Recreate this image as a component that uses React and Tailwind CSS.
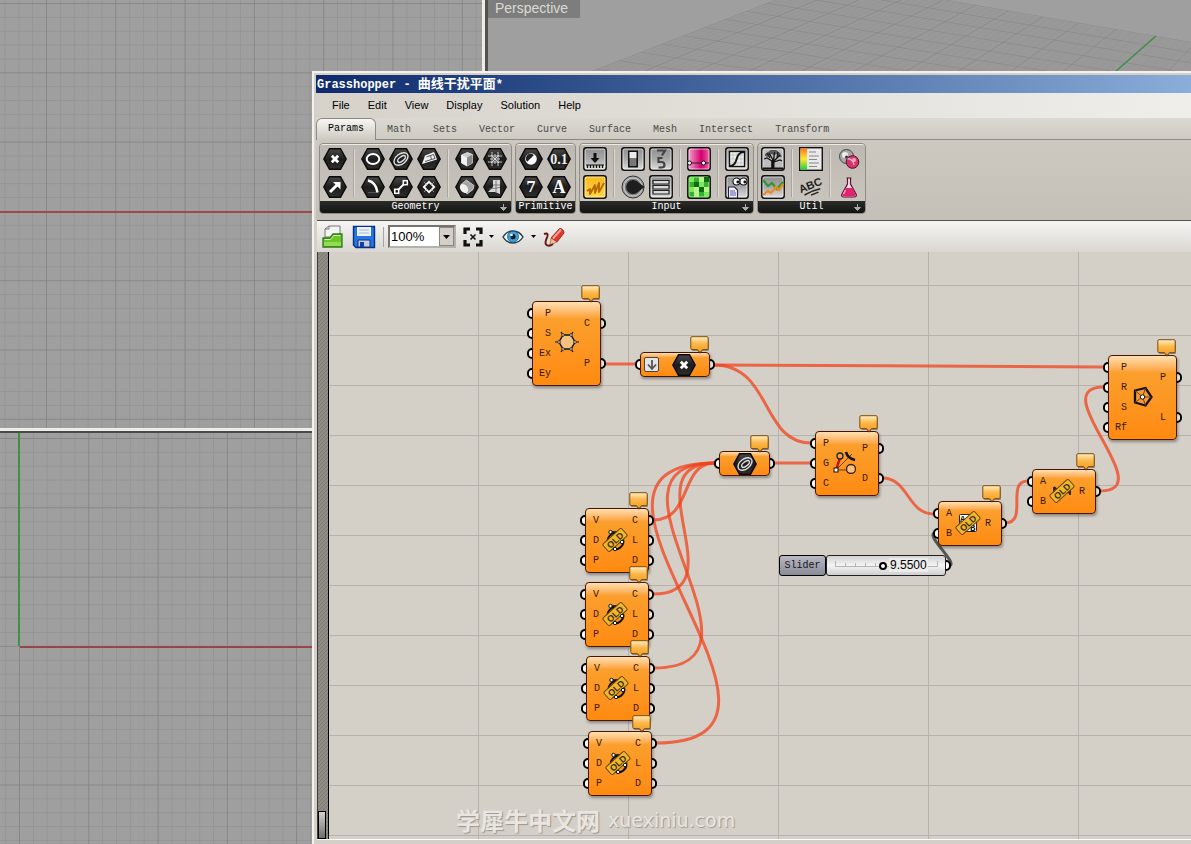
import React from 'react';

/* ---------- Ribbon icons ---------- */

const Hex = ({ children }) => (
  <svg className="h-6 w-6" viewBox="0 0 24 24">
    <defs>
      <linearGradient id="hexFill" x1="0" y1="0" x2="0" y2="1">
        <stop offset="0" stopColor="#4a4a4a" />
        <stop offset="0.5" stopColor="#1c1c1c" />
        <stop offset="1" stopColor="#2e2e2e" />
      </linearGradient>
    </defs>
    <polygon points="0.8,12 6.5,1.8 17.5,1.8 23.2,12 17.5,22.2 6.5,22.2" fill="url(#hexFill)" stroke="#0a0a0a" strokeWidth="1.4" />
    {children}
  </svg>
);

const Tile = ({ fill = 'url(#tileGray)', children }) => (
  <svg className="h-6 w-6" viewBox="0 0 24 24">
    <defs>
      <linearGradient id="tileGray" x1="0" y1="0" x2="0" y2="1">
        <stop offset="0" stopColor="#8e8e8e" />
        <stop offset="0.5" stopColor="#a9a9a9" />
        <stop offset="1" stopColor="#dedede" />
      </linearGradient>
      <linearGradient id="tilePink" x1="0" y1="0" x2="1" y2="0">
        <stop offset="0" stopColor="#f7a8d4" />
        <stop offset="0.6" stopColor="#d3006c" />
        <stop offset="1" stopColor="#e86aa8" />
      </linearGradient>
      <linearGradient id="tileYellow" x1="0" y1="0" x2="0" y2="1">
        <stop offset="0" stopColor="#f7b71c" />
        <stop offset="1" stopColor="#ffd84a" />
      </linearGradient>
    </defs>
    <rect x="0.8" y="0.8" width="22.4" height="22.4" rx="2.5" fill={fill} stroke="#111" strokeWidth="1.5" />
    <rect x="2.1" y="2.1" width="19.8" height="19.8" rx="1.5" fill="none" stroke="#fff" strokeOpacity="0.55" strokeWidth="1" />
    {children}
  </svg>
);

const icons = {
  point: (
    <Hex>
      <path d="M8.8 8.8l6.4 6.4M15.2 8.8l-6.4 6.4" stroke="#fff" strokeWidth="2.8" />
    </Hex>
  ),
  vector: (
    <Hex>
      <path d="M7 17l7-7" stroke="#fff" strokeWidth="3" />
      <path d="M10 7h7.5v7.5z" fill="#fff" />
    </Hex>
  ),
  circle: (
    <Hex>
      <ellipse cx="12" cy="12" rx="6.3" ry="5" fill="none" stroke="#fff" strokeWidth="2" />
    </Hex>
  ),
  curve: (
    <Hex>
      <g fill="none" stroke="#ddd" strokeWidth="1.4" transform="rotate(-38 12 12)">
        <ellipse cx="12" cy="12" rx="8" ry="5" />
        <ellipse cx="12.5" cy="12.3" rx="4.6" ry="2.2" />
      </g>
    </Hex>
  ),
  surface: (
    <Hex>
      <path d="M8 8.500l9-3.500 3 7.500-15 4.500z" fill="#f2f2f2" />
      <path d="M9.500 10l4-1.500 1 4-6.500 2M13.500 8.500l3-1 1.500 4-3.500 1" stroke="#444" strokeWidth="0.900" fill="none" />
    </Hex>
  ),
  arc: (
    <Hex>
      <path d="M7 5.500c5 1 8.500 5 9.500 12" fill="none" stroke="#fff" strokeWidth="2.400" />
      <path d="M7.500 17.500h9" fill="none" stroke="#999" strokeWidth="0.800" strokeDasharray="1 1" />
    </Hex>
  ),
  line: (
    <Hex>
      <path d="M8 16l8-8" stroke="#fff" strokeWidth="1.800" />
      <rect x="14.300" y="5.700" width="4" height="4" fill="#222" stroke="#fff" strokeWidth="1.500" />
      <rect x="5.700" y="14.300" width="4" height="4" fill="#222" stroke="#fff" strokeWidth="1.500" />
    </Hex>
  ),
  plane: (
    <Hex>
      <path d="M12 6.800l5.200 5.200-5.200 5.200-5.200-5.200z" fill="#222" stroke="#fff" strokeWidth="1.800" />
      <path d="M7 7l3 3M17 7l-3 3M7 17l3-3M17 17l-3-3" stroke="#aaa" strokeWidth="0.800" />
    </Hex>
  ),
  brep: (
    <Hex>
      <path d="M6.500 8l6-2.500 5 2v8.500l-5.500 3-5.500-3z" fill="#ccc" stroke="#eee" strokeWidth="0.800" />
      <path d="M6.500 8l5.500 2.500v8.500l-5.500-3z" fill="#f2f2f2" />
      <path d="M12 10.500l5.500-3v8.500l-5.500 3z" fill="#8a8a8a" />
    </Hex>
  ),
  mesh: (
    <Hex>
      <path d="M5 9h14M5 15h14M9 5v14M15 5v14M12 7v10M7 12h10M8 8l8 8M16 8l-8 8" stroke="#ddd" strokeWidth="0.900" fill="none" />
    </Hex>
  ),
  box: (
    <Hex>
      <path d="M6 9.500l5.500-4.500 7.500 5.500-1 4-6 4.500z" fill="#a5a5a5" stroke="#ddd" strokeWidth="0.800" />
      <ellipse cx="9" cy="13.500" rx="3.600" ry="5" fill="#f0f0f0" transform="rotate(-38 9 13.500)" />
    </Hex>
  ),
  solid: (
    <Hex>
      <path d="M10 5l7 0v14l-5-2-7 0 5-5z" fill="#d8d8d8" />
      <path d="M13 5.500v12M6 14l11-1.500M10 10h7" stroke="#666" strokeWidth="0.800" fill="none" />
    </Hex>
  ),
  bool: (
    <Hex>
      <circle cx="12" cy="12" r="5.800" fill="#fff" />
      <path d="M8.200 14.800a4.600 4.600 0 0 1 6.600-6.600z" fill="#222" />
    </Hex>
  ),
  number: (
    <Hex>
      <text x="12" y="17" textAnchor="middle" className="font-['Liberation_Serif',serif] text-[14px] font-bold" fill="#eee">0.1</text>
    </Hex>
  ),
  integer: (
    <Hex>
      <text x="12" y="17" textAnchor="middle" className="font-['DejaVu_Serif',serif] text-[14px] font-bold" fill="#fff">7</text>
    </Hex>
  ),
  text: (
    <Hex>
      <text x="12" y="18" textAnchor="middle" className="font-['Liberation_Serif',serif] text-[18px] font-bold" fill="#fff">A</text>
    </Hex>
  ),
  download: (
    <Tile>
      <path d="M10.500 6h3v5h3l-4.500 5-4.500-5h3z" fill="#111" />
      <path d="M3 18h18M4.500 18v3M7.500 18v3M10.500 18v3M13.500 18v3M16.500 18v3M19.500 18v3" stroke="#111" strokeWidth="1.200" />
    </Tile>
  ),
  scribble: (
    <Tile fill="url(#tileYellow)">
      <path d="M4 16l3-2 0 5 5-9 0 8 4-10 0 9 5-9" fill="none" stroke="#b86a00" strokeWidth="1.900" strokeLinejoin="round" />
    </Tile>
  ),
  toggle: (
    <Tile>
      <rect x="7" y="3.500" width="10" height="17" fill="#111" />
      <rect x="8.500" y="12" width="7" height="7" fill="#777" />
      <rect x="8.500" y="5" width="7" height="6.500" fill="#ececec" />
    </Tile>
  ),
  knob: (
    <svg className="h-6 w-6" viewBox="0 0 24 24">
      <circle cx="12" cy="12" r="11" fill="#a8a8a8" stroke="#333" strokeWidth="1" />
      <circle cx="12" cy="12" r="8.800" fill="#777" stroke="#ddd" strokeWidth="0.700" />
      <path d="M23.500 12l-6-4.500a7 7 0 1 0 0 9z" fill="#1e1e1e" />
    </svg>
  ),
  digits: (
    <Tile>
      <path d="M8 3.500l8 0-3 5M13.500 11h-4v4h3c4 0 4 5.500 0 5.500h-3" fill="none" stroke="#444" strokeWidth="2.200" />
    </Tile>
  ),
  list: (
    <Tile>
      <path d="M4 5.500h16v3.500H4zM4 10.500h16v3.500H4zM4 15.500h16v3.500H4z" fill="#d8d8d8" stroke="#222" strokeWidth="1.200" />
    </Tile>
  ),
  gradient: (
    <Tile fill="url(#tilePink)">
      <path d="M2 16h20" stroke="#222" strokeWidth="1.200" />
      <circle cx="2.500" cy="16" r="2" fill="#fff" stroke="#111" strokeWidth="1" />
      <circle cx="16.500" cy="16" r="2" fill="#fff" stroke="#111" strokeWidth="1" />
    </Tile>
  ),
  image: (
    <Tile fill="#37b02c">
      <path d="M2 2h5v5h-5zM12 7h5v5h-5zM2 12h5v5h-5zM17 17h5v5h-5z" fill="#7bea5c" />
      <path d="M7 7h5v5h-5zM17 2h5v5h-5zM12 12h5v5h-5z" fill="#0d6b14" />
      <path d="M12 2h5v5h-5zM7 12h5v10h-5zM17 12h5v5h-5z" fill="#b8f58e" />
    </Tile>
  ),
  graph: (
    <Tile>
      <rect x="4.500" y="4.500" width="15" height="15" fill="#eee" stroke="#111" strokeWidth="1.300" />
      <path d="M8 5v14M12 5v14M16 5v14M5 8h14M5 12h14M5 16h14" stroke="#bbb" strokeWidth="0.700" />
      <path d="M5 19c9 0 4-14 14-14" fill="none" stroke="#111" strokeWidth="1.900" />
    </Tile>
  ),
  reader: (
    <Tile>
      <circle cx="11.500" cy="6.500" r="3.500" fill="#fff" stroke="#111" strokeWidth="1.100" />
      <circle cx="18.500" cy="6.500" r="3.500" fill="#fff" stroke="#111" strokeWidth="1.100" />
      <circle cx="12.800" cy="7" r="1.400" fill="#111" />
      <circle cx="19.800" cy="7" r="1.400" fill="#111" />
      <path d="M3.500 12h6l3 3v8h-9z" fill="#f1f1ff" stroke="#223" strokeWidth="1.100" />
      <path d="M5 16h5M5 18h6M5 20h6" stroke="#55a" strokeWidth="1" />
    </Tile>
  ),
  tree: (
    <Tile fill="#bdbdbd">
      <path d="M11 21l0-7-5-3-3 1M12 13l-4-7M12.500 14l1-9M13 14l6-6M13 15l6-2 2 1M9 11l-3-5M16 11l1-6" fill="none" stroke="#111" strokeWidth="1.300" />
      <path d="M4 7l3-2 3-2 5 0 4 3 2 4-3 0-2-3-3 1-3-1-3 3-3-1z" fill="#222" fillOpacity="0.650" />
      <path d="M10.500 13h3v8h-3zM2 20.500h20v2H2z" fill="#111" />
    </Tile>
  ),
  quickgraph: (
    <Tile>
      <path d="M2 5l5 6 4-3 5 6 6-7" fill="none" stroke="#2c9a33" strokeWidth="2.200" />
      <path d="M2 20l5-4 3 2 5-6 3 3 4-6" fill="none" stroke="#f08a1c" strokeWidth="2.200" />
    </Tile>
  ),
  legend: (
    <svg className="h-6 w-6" viewBox="0 0 24 24">
      <defs>
        <linearGradient id="legendBar" x1="0" y1="0" x2="0" y2="1">
          <stop offset="0" stopColor="#ff7a1a" />
          <stop offset="0.500" stopColor="#ffe833" />
          <stop offset="1" stopColor="#1fd13a" />
        </linearGradient>
      </defs>
      <rect x="0.700" y="0.700" width="22.600" height="22.600" fill="#e9e9e9" stroke="#111" strokeWidth="1.400" />
      <rect x="1.400" y="1.400" width="6.600" height="21.200" fill="url(#legendBar)" />
      <path d="M10 5h7M10 9h10M10 12.500h8M10 16h10M10 19.500h8" stroke="#888" strokeWidth="1" />
    </svg>
  ),
  abc: (
    <svg className="h-6 w-6 overflow-visible" viewBox="0 0 24 24">
      <g transform="rotate(-22 12 12)">
        <text x="12" y="14" textAnchor="middle" className="font-['Liberation_Sans',sans-serif] text-[11px] font-bold" fill="#222">ABC</text>
        <path d="M3 17c6-1 12-1 17 0M9 19.500h8" stroke="#222" strokeWidth="1.500" fill="none" />
      </g>
    </svg>
  ),
  cherry: (
    <svg className="h-6 w-6" viewBox="0 0 24 24">
      <circle cx="9.500" cy="9.500" r="7" fill="#a8a8a8" stroke="#444" strokeWidth="1" />
      <circle cx="8" cy="8" r="3" fill="#eee" />
      <circle cx="9.500" cy="10" r="1.500" fill="#333" />
      <circle cx="15.500" cy="15" r="6.300" fill="#d4366b" stroke="#551028" strokeWidth="1" />
      <path d="M10.500 11.500a7 7 0 0 1 6.500 6.500" stroke="#f7b7cb" strokeWidth="1.300" fill="none" />
      <circle cx="17" cy="13" r="2" fill="#f8a8c0" />
    </svg>
  ),
  flask: (
    <svg className="h-6 w-6" viewBox="0 0 24 24">
      <path d="M9.500 3h5M10.500 3v6l-5.500 10c-1 2 0 3 2 3h10c2 0 3-1 2-3l-5.500-10v-6" fill="#fbdde8" stroke="#5a1030" strokeWidth="1.200" />
      <path d="M8.500 13h7l3 6.500c.5 1.500-.5 2-1.500 2H7c-1 0-2-.5-1.500-2z" fill="#e0246e" />
      <path d="M8.500 15l-2 4" stroke="#f9a3c4" strokeWidth="1.500" />
    </svg>
  ),
};

const menuItems = ['File', 'Edit', 'View', 'Display', 'Solution', 'Help'];
const tabs = ['Params', 'Math', 'Sets', 'Vector', 'Curve', 'Surface', 'Mesh', 'Intersect', 'Transform'];

const ribbonGroups = [
  {
    name: 'Geometry',
    expandable: true,
    sections: [
      ['point', 'vector'],
      ['circle', 'arc', 'curve', 'line', 'surface', 'plane'],
      ['brep', 'box', 'mesh', 'solid'],
    ],
  },
  { name: 'Primitive', expandable: false, sections: [['bool', 'integer', 'number', 'text']] },
  {
    name: 'Input',
    expandable: true,
    sections: [
      ['download', 'scribble'],
      ['toggle', 'knob', 'digits', 'list'],
      ['gradient', 'image'],
      ['graph', 'reader'],
    ],
  },
  {
    name: 'Util',
    expandable: true,
    sections: [['tree', 'quickgraph'], ['legend', 'abc'], ['cherry', 'flask']],
  },
];

const RibbonGroup = ({ group }) => (
  <section className="flex flex-col overflow-hidden rounded-[4px] border border-[#8f8b85] bg-linear-to-b from-[#bdb8b1] to-[#cbc7bf]">
    <div className="flex flex-1 rounded-t-[3px] border-t border-[#efece6] pl-px pr-0.5">
      {group.sections.map((section, i) => (
        <React.Fragment key={section[0]}>
          {i > 0 && <div className="mx-1 my-1 w-[2px] border-l border-[#aaa69f] bg-[#dedad3]" />}
          <div className="grid grid-flow-col grid-rows-2">
            {section.map((name) => (
              <button key={name} type="button" aria-label={name} className="flex h-7 w-7 items-center justify-center">
                {icons[name]}
              </button>
            ))}
          </div>
        </React.Fragment>
      ))}
    </div>
    <div className="relative h-[12px] bg-linear-to-b from-[#2c2c2a] to-[#131312] text-center text-[10px] leading-[12px] text-white">
      {group.name}
      {group.expandable && (
        <svg className="absolute right-1 top-[3px] h-[7px] w-[7px]" viewBox="0 0 7 7">
          <path d="M3.500 0v6M0.500 3.500l3 3 3-3z" stroke="#aaa" fill="#aaa" />
        </svg>
      )}
    </div>
  </section>
);

/* ---------- Canvas toolbar ---------- */

const DropArrow = () => (
  <svg className="h-[3px] w-[5px]" viewBox="0 0 5 3">
    <path d="M0 0h5l-2.500 3z" fill="#000" />
  </svg>
);

const Toolbar = () => (
  <div className="flex h-8 items-center border-t border-[#55524d] bg-linear-to-b from-[#f6f5f3] to-[#dad7d1] pl-[5px]">
    <button type="button" aria-label="Open">
      <svg className="h-6 w-[22px]" viewBox="0 0 22 24">
        <path d="M3 12V4l4-3h11v11z" fill="#f4f4f4" stroke="#777" />
        <path d="M7 1v3H3" fill="none" stroke="#777" />
        <path d="M1 22v-9h7l3-4h9v13z" fill="#6cc52f" stroke="#2c7a12" strokeWidth="1.300" />
        <path d="M2.500 14.500h6l3-4h7" stroke="#c8f3a2" fill="none" />
        <path d="M2 17h17v4h-17z" fill="#93dc50" />
      </svg>
    </button>
    <button type="button" aria-label="Save" className="ml-2">
      <svg className="h-6 w-6" viewBox="0 0 24 24">
        <path d="M1.500 1.500h21v21H4l-2.500-2.500z" fill="#2476e4" stroke="#0b2f86" strokeWidth="1.400" />
        <path d="M5 2h14v9H5z" fill="#eef3fb" />
        <path d="M7 5h10M7 8h10" stroke="#9db4d8" />
        <path d="M6 15h12v7H6z" fill="#c5cbd6" stroke="#0b2f86" />
        <path d="M8 17h4v5H8z" fill="#0d3fa6" />
      </svg>
    </button>
    <div className="ml-[7px] h-5 w-px bg-[#a9a6a0]" />
    <div className="relative ml-1 h-[23px] w-[68px] border-2 border-[#77746f] border-b-[#b5b2ac] border-r-[#b5b2ac] bg-white">
      <select aria-label="Zoom" className="block h-full w-full appearance-none bg-white px-px font-['Liberation_Sans',sans-serif] text-[13px] leading-[18px] text-black">
        <option>100%</option>
      </select>
      <div className="pointer-events-none absolute inset-y-0 right-0 flex w-[15px] items-center justify-center border border-[#8a8781] bg-[#d4d0c8]">
        <svg className="h-1 w-[7px]" viewBox="0 0 7 4">
          <path d="M0 0h7l-3.500 4z" fill="#000" />
        </svg>
      </div>
    </div>
    <button type="button" aria-label="Zoom extents" className="ml-[7px] flex items-center gap-[6px]">
      <svg className="h-5 w-5" viewBox="0 0 20 20">
        <path d="M2 7V2h5M13 2h5v5M18 13v5h-5M7 18H2v-5" fill="none" stroke="#111" strokeWidth="3.200" />
        <path d="M7.500 7.500l5 5M12.500 7.500l-5 5" stroke="#111" strokeWidth="1.600" />
      </svg>
      <DropArrow />
    </button>
    <button type="button" aria-label="Preview" className="ml-[8px] flex items-center gap-[7px]">
      <svg className="h-5 w-[22px]" viewBox="0 0 22 20">
        <path d="M1 10c5-8 15-8 20 0-5 8-15 8-20 0z" fill="#f4fbff" stroke="#223a4a" strokeWidth="1.400" />
        <circle cx="11" cy="9.700" r="5.500" fill="#3ea2dc" stroke="#145580" strokeWidth="0.800" />
        <circle cx="11" cy="9.700" r="2.600" fill="#0b1b28" />
        <circle cx="9.500" cy="8" r="1.300" fill="#fff" />
      </svg>
      <DropArrow />
    </button>
    <button type="button" aria-label="Sketch" className="ml-[6px]">
      <svg className="h-6 w-6" viewBox="0 0 24 24">
        <path d="M9 13l8-9c2-1.500 5 1 5 4l-7 9z" fill="#e2382c" stroke="#8f1812" strokeWidth="0.800" />
        <path d="M11 13.500l8-9" stroke="#f7a096" strokeWidth="2" />
        <path d="M9 13l6 4-7 3z" fill="#ecc38c" stroke="#a33" strokeWidth="0.600" />
        <path d="M2 9c5-2 4 2 2 6-2 6 3 7 7 4" fill="none" stroke="#6b1511" strokeWidth="1.900" />
      </svg>
    </button>
  </div>
);

/* ---------- Canvas components ---------- */

const OldTag = () => (
  <g transform="rotate(-42 13 13)">
    <rect x="0.500" y="8" width="25" height="10" rx="1.500" fill="#edb930" stroke="#6b4300" strokeWidth="1" />
    <text x="13" y="16.500" textAnchor="middle" className="font-['Liberation_Sans',sans-serif] text-[9px] font-bold" fill="#4a2a00">OLD</text>
  </g>
);

const glyphs = {
  polygonal: (
    <g>
      <path d="M9 6h8l4 7-4 7H9l-4-7z" fill="#f3c07f" stroke="#111" strokeWidth="1.400" />
      <path d="M9 6l-2-3M17 6l2-3M21 13h4M17 20l2 3M9 20l-2 3M5 13H1" stroke="#111" strokeWidth="1.200" />
      <g fill="#fff" stroke="#111" strokeWidth="0.800">
        <circle cx="9" cy="6" r="1.300" />
        <circle cx="17" cy="6" r="1.300" />
        <circle cx="21" cy="13" r="1.300" />
        <circle cx="17" cy="20" r="1.300" />
        <circle cx="9" cy="20" r="1.300" />
        <circle cx="5" cy="13" r="1.300" />
      </g>
    </g>
  ),
  closest: (
    <g>
      <path d="M4 22L20 6M4 22h15" stroke="#744000" strokeWidth="1" />
      <path d="M4 22L8 10" stroke="#c6130c" strokeWidth="2.400" />
      <circle cx="8" cy="8" r="3" fill="#f0a04a" stroke="#222" strokeWidth="1.300" />
      <circle cx="19" cy="21" r="4.500" fill="#f6c183" stroke="#3a1c00" strokeWidth="1.300" />
      <path d="M14 4c1 4 4 7 9 8" fill="none" stroke="#111" strokeWidth="2.600" />
      <rect x="2" y="20" width="4" height="4" fill="#fff" stroke="#111" />
    </g>
  ),
  pentagon: (
    <g>
      <path d="M5 6.500l10.500-2.500 6 9-6 8.500-10.500-3z" fill="#f59a35" stroke="#111" strokeWidth="2.300" />
      <path d="M5 6.500l7.500 6.500 3-9M21.500 13h-9l3 8.500M5 18.500l7.500-5.500" stroke="#7a4000" strokeWidth="1" fill="none" />
      <circle cx="12.500" cy="13" r="2.200" fill="#fff" stroke="#111" />
    </g>
  ),
  oldCircle: (
    <g>
      <path d="M21 12a8 8 0 0 1-12 9M6 16a8 8 0 0 1 9-10" fill="none" stroke="#111" strokeWidth="2" />
      <path d="M8 5h9" stroke="#111" strokeWidth="1.600" />
      <OldTag />
      <circle cx="8.500" cy="5" r="1.700" fill="#fff" stroke="#111" />
      <circle cx="20" cy="15" r="1.700" fill="#fff" stroke="#111" />
      <circle cx="13" cy="22" r="1.700" fill="#fff" stroke="#111" />
    </g>
  ),
  oldDivide: (
    <g>
      <rect x="4.500" y="4.500" width="17" height="17" rx="1" fill="#fff" stroke="#222" />
      <text x="5" y="12" className="text-[9px] font-bold" fill="#111">A</text>
      <text x="15" y="21" className="text-[9px] font-bold" fill="#111">B</text>
      <OldTag />
    </g>
  ),
  oldMultiply: (
    <g>
      <path d="M5 9v6M5 9l4 4M21 11v6M17 12l3 3" stroke="#222" strokeWidth="1.800" />
      <OldTag />
    </g>
  ),
};

// Positions are relative to the top left corner of the canvas
const curve = { glyph: 'oldCircle', w: 64, h: 65, inputs: ['V', 'D', 'P'], outputs: ['C', 'L', 'D'], first: [12, 12], icon: [30, 32] };

const nodes = [
  { id: 'polygonal', x: 215, y: 49, w: 69, h: 85, glyph: 'polygonal', inputs: ['P', 'S', 'Ex', 'Ey'], outputs: ['C', '', 'P'], first: [12, 22], icon: [35, 41], inset: true },
  { id: 'polygon', x: 791, y: 103, w: 69, h: 85, glyph: 'pentagon', inputs: ['P', 'R', 'S', 'Rf'], outputs: ['P', '', 'L'], first: [12, 22], icon: [35, 42], inset: true },
  { id: 'closest', x: 498, y: 179, w: 64, h: 65, glyph: 'closest', inputs: ['P', 'G', 'C'], outputs: ['P', '', 'D'], first: [12, 17], icon: [30, 30], gap: 15 },
  { id: 'divide', x: 621, y: 249, w: 64, h: 45, glyph: 'oldDivide', inputs: ['A', 'B'], outputs: ['R'], first: [12, 22], icon: [30, 22] },
  { id: 'multiply', x: 715, y: 217, w: 64, h: 45, glyph: 'oldMultiply', inputs: ['A', 'B'], outputs: ['R'], first: [12, 22], icon: [30, 22] },
  { id: 'curve1', x: 268, y: 256, ...curve },
  { id: 'curve2', x: 268, y: 330, ...curve },
  { id: 'curve3', x: 269, y: 404, ...curve },
  { id: 'curve4', x: 271, y: 479, ...curve },
];

const wires = [
  'M288 112L319 112',
  'M397 113C530 113 650 115 787 115',
  'M397 113C455 113 444 191 494 191',
  'M457 211L494 211',
  'M565 226C592 226 590 262 617 262',
  'M688 271C712 271 688 229 711 229',
  'M783 239C845 239 725 135 787 135',
  'M336 268C376 268 362 211 398 211',
  'M336 342C422 342 312 211 398 211',
  'M337 416C472 416 263 211 398 211',
  'M339 491C529 491 208 211 398 211',
];

const Bubble = () => (
  <svg className="absolute -top-4 right-0 h-[19px] w-5" viewBox="0 0 20 19">
    <defs>
      <linearGradient id="bubbleFill" x1="0" y1="0" x2="0" y2="1">
        <stop offset="0" stopColor="#ffecc2" />
        <stop offset="0.450" stopColor="#fbb84a" />
        <stop offset="1" stopColor="#f79a1c" />
      </linearGradient>
    </defs>
    <path d="M2.500 2.500h15.500q1 0 1 1v10.500q0 1-1 1h-5.500l-2.500 3-2.500-3h-4.500q-1 0-1-1v-10.500q0-1 1-1z" fill="#000" fillOpacity="0.350" />
    <path d="M2 .7h15q1.200 0 1.200 1.200v10.500q0 1.200-1.200 1.200h-4.500l-2.500 3-2.500-3h-5.500q-1.200 0-1.200-1.200v-10.500q0-1.200 1.200-1.200z" fill="url(#bubbleFill)" stroke="#7d4d0c" strokeWidth="1" />
  </svg>
);

const portClass = 'absolute h-[11px] w-[10px] rounded-full border-2 border-black bg-white';
const bodyClass = 'relative h-full w-full rounded-[4px] border border-[#4a1505] bg-linear-to-b from-[#ffe0b0] via-[#fb9f2c] via-20% to-[#ff8a0f] shadow-[1px_2px_3px_rgba(0,0,0,0.35)]';

const Node = ({ node }) => {
  const outs = node.outputs
    .map((label, i) => ({ label, y: node.first[1] + i * (node.gap || 20) }))
    .filter((o) => o.label);

  return (
    <div className="absolute" style={{ left: node.x, top: node.y, width: node.w, height: node.h }}>
      {node.inputs.map((label, i) => (
        <span key={label} className={`${portClass} -left-[5px]`} style={{ top: node.first[0] + i * 20 - 5 }} />
      ))}
      {outs.map((o) => (
        <span key={o.label} className={`${portClass} -right-[5px]`} style={{ top: o.y - 5 }} />
      ))}
      <div className={bodyClass}>
        <div className={`absolute top-[2px] flex flex-col text-[10px] leading-5 text-[#3a1a00] ${node.inset ? 'left-1 w-[14px] items-end' : 'left-[7px]'}`}>
          {node.inputs.map((label) => (
            <span key={label}>{label}</span>
          ))}
        </div>
        {outs.map((o) => (
          <span
            key={o.label}
            className="absolute right-[10px] text-[10px] leading-5 text-[#3a1a00]"
            style={{ top: o.y - 10 }}
          >
            {o.label}
          </span>
        ))}
        <svg
          className="absolute h-[26px] w-[26px]"
          viewBox="0 0 26 26"
          style={{ left: node.icon[0] - 14, top: node.icon[1] - 14 }}
        >
          {glyphs[node.glyph]}
        </svg>
      </div>
      <Bubble />
    </div>
  );
};

const ParamNode = ({ x, y, w, children }) => (
  <div className="absolute h-[25px]" style={{ left: x, top: y, width: w }}>
    <span className={`${portClass} -left-[5px] top-[7px]`} />
    <span className={`${portClass} -right-[5px] top-[7px]`} />
    <div className={`${bodyClass} flex items-center justify-center`}>{children}</div>
    <Bubble />
  </div>
);

const Slider = () => (
  <div className="absolute left-[462px] top-[303px] flex h-[21px] w-[167px] text-[10px]">
    <span className={`${portClass} -right-[5px] top-[5px]`} />
    <label htmlFor="slider" className="relative flex w-[47px] items-center justify-center rounded-[3px] border border-black bg-linear-to-b from-[#b9b9c4] to-[#8b8b98] text-[#15151c]">
      Slider
    </label>
    <div className="relative flex flex-1 items-center rounded-[3px] border border-[#222] bg-linear-to-b from-[#d2d2d2] via-[#f4f4f4] to-[#cfcfcf] pl-[3px]">
      <svg className="pointer-events-none absolute left-2 top-[5px] h-[8px] w-[110px]" viewBox="0 0 110 8">
        <path d="M.5 0v5.500h102V0M10.500 2v3M20.500 2v3M30.500 2v3M40.500 2v3" fill="none" stroke="#b4b4b4" />
      </svg>
      <input
        id="slider"
        type="range"
        min="0"
        max="20"
        step="0.05"
        defaultValue="9.55"
        className="relative h-4 w-[110px] appearance-none bg-transparent [&::-webkit-slider-thumb]:h-2 [&::-webkit-slider-thumb]:w-2 [&::-webkit-slider-thumb]:appearance-none [&::-webkit-slider-thumb]:rounded-full [&::-webkit-slider-thumb]:border-2 [&::-webkit-slider-thumb]:border-black [&::-webkit-slider-thumb]:bg-white"
      />
      <output htmlFor="slider" className="pointer-events-none absolute left-[62px] top-[2px] bg-[#ececec] px-px font-['Liberation_Sans',sans-serif] text-[12px] leading-[14px] text-black">
        9.5500
      </output>
    </div>
  </div>
);

const Canvas = () => (
  <div className="relative flex-1 overflow-hidden border-l border-[#3c3a37] bg-[#d4d0c8]">
    <svg className="absolute -left-px top-0 h-full w-[calc(100%+1px)]">
      <defs>
        <pattern id="canvasGrid" x="11" y="33" width="150" height="50" patternUnits="userSpaceOnUse">
          <path d="M0 .5h150M.5 0v50" stroke="#b7b3ac" strokeWidth="1" />
        </pattern>
        <pattern id="hatch" width="4" height="4" patternUnits="userSpaceOnUse">
          <rect width="4" height="4" fill="#8f8c86" />
          <path d="M0 4L4 0" stroke="#7c7973" />
        </pattern>
      </defs>
      <rect width="100%" height="100%" fill="url(#canvasGrid)" />
      <rect width="12" height="100%" fill="url(#hatch)" />
      <path d="M11.500 0v2000" stroke="#000" />
      <g fill="none" stroke="#f2431c" strokeOpacity="0.750" strokeWidth="3">
        {wires.map((d) => (
          <path key={d} d={d} />
        ))}
      </g>
      <path d="M631 314C645 314 607 283 618 281" fill="none" stroke="#555" strokeWidth="3" />
    </svg>

    {/* Layer that starts on the same origin as the wires */}
    <div className="absolute -left-px top-0 h-full w-full">
      <ParamNode x={323} y={100} w={70}>
        <span className="mr-[13px] flex h-[15px] w-[15px] items-center justify-center rounded-[2px] border border-[#444] bg-[#e4e4e4]">
          <svg className="h-3 w-3" viewBox="0 0 12 12">
            <path d="M6 1v8M2 5.500l4 4.500 4-4.500" fill="none" stroke="#555" strokeWidth="1.800" />
          </svg>
        </span>
        <span className="mr-[10px]">{icons.point}</span>
      </ParamNode>
      <ParamNode x={402} y={199} w={51}>{icons.curve}</ParamNode>
      <Slider />
      {nodes.map((node) => (
        <Node key={node.id} node={node} />
      ))}
    </div>

    <div className="absolute bottom-0 left-0 h-7 w-2 border border-black bg-linear-to-b from-[#d2d2d2] to-[#6f6f6f]" />

    {/* Watermark */}
    <p className="absolute bottom-[4px] left-[138px] flex items-center gap-[8px] whitespace-nowrap text-[#e9e6e1] [text-shadow:1px_1px_1px_#9a9690]">
      <span className="font-['Noto_Sans_CJK_SC',sans-serif] text-[24px] font-bold leading-[30px]">学犀牛中文网</span>
      <span className="font-['DejaVu_Sans',sans-serif] text-[19px] leading-[30px]">xuexiniu.com</span>
    </p>
  </div>
);

/* ---------- Modelling viewports behind the window ---------- */

const FlatGrid = ({ id, x, y, children }) => (
  <svg className="absolute inset-0 h-full w-full">
    <defs>
      <pattern id={id} x={x} y={y} width="69.300" height="69.300" patternUnits="userSpaceOnUse">
        <path
          d="M14.360 0v69.300M28.220 0v69.300M42.080 0v69.300M55.940 0v69.300M0 14.360h69.300M0 28.220h69.300M0 42.080h69.300M0 55.940h69.300"
          stroke="#949494"
          strokeWidth="0.900"
        />
        <path d="M.5 0v69.300M0 .5h69.300" stroke="#878787" />
      </pattern>
    </defs>
    <rect width="100%" height="100%" fill={`url(#${id})`} />
    {children}
  </svg>
);

const range = (n) => Array.from({ length: n }, (_, i) => i);

const PerspectiveGrid = () => (
  <svg className="absolute inset-0 h-full w-full">
    <defs>
      <clipPath id="groundPlane">
        <path d="M104 71L287 0H459L703 42L1200 128V71z" />
      </clipPath>
    </defs>
    <g clipPath="url(#groundPlane)" stroke="#868686">
      <rect width="100%" height="71" fill="#9b9b9b" stroke="none" />
      {range(75).map((i) => (
        <path key={`a${i}`} d={`M${104 + i * 10.48} 71L${287 + i * 8.4} 0`} strokeOpacity={i % 5 ? 0.15 : 0.65} />
      ))}
      {range(90).map((j) => (
        <path key={`b${j}`} d={`M0 ${-79 + j * 2.4}L703 ${42 + j * 2.1}`} strokeOpacity={j % 5 ? 0.15 : 0.65} />
      ))}
    </g>
    <path d="M627 72L668 36" stroke="#3f8f45" strokeWidth="1.500" />
  </svg>
);

const Viewports = () => (
  <div className="grid h-full grid-cols-[482px_1fr] grid-rows-[428px_1fr] bg-[#9f9f9f]">
    <div className="relative">
      <FlatGrid id="gridTop" x={46} y={3}>
        <path d="M0 212h482" stroke="#9c4a4c" strokeWidth="2" />
      </FlatGrid>
    </div>
    <div className="relative border-l-3 border-[#efede8]">
      <div className="absolute inset-0 border-l-3 border-[#55524e]">
        <PerspectiveGrid />
        <span className="absolute left-0 top-0 h-[18px] w-[92px] bg-[#7d7d7d] pl-[7px] font-['Liberation_Sans',sans-serif] text-[14px] leading-[17px] text-[#dcdad5]">
          Perspective
        </span>
      </div>
    </div>
    <div className="relative col-span-2 border-t-3 border-[#efede8]">
      <div className="absolute inset-0 border-t-2 border-[#4a4a4a]">
        <FlatGrid id="gridFront" x={19} y={5}>
          <path d="M19 0v213" stroke="#3f8f45" strokeWidth="2" />
          <path d="M20 214h480" stroke="#96464a" strokeWidth="2" />
        </FlatGrid>
      </div>
    </div>
  </div>
);

const App = () => {
  return (
    <div className="relative h-screen overflow-hidden font-['Liberation_Mono','Noto_Sans_CJK_SC',monospace]">
      <Viewports />

      {/* Grasshopper window */}
      <main className="absolute bottom-0 left-[312px] right-0 top-[71px] flex flex-col border-l-2 border-t-2 border-[#f4f2ee] bg-[#d4d0c8] pl-[2px] pt-[2px]">
        <h1 className="h-[18px] whitespace-nowrap bg-linear-to-r from-[#0e2a6c] to-[#8badd9] pl-px text-[12px] font-bold leading-[19px] text-white">
          Grasshopper - <span className="text-[13px]">曲线干扰平面</span>*
        </h1>

        <nav className="flex h-[25px] items-center gap-[18px] bg-linear-to-r from-[#d6d2ca] to-[#efeeeb] pl-4 font-['Liberation_Sans',sans-serif] text-[11px] text-black">
          {menuItems.map((item) => (
            <button key={item} type="button">{item}</button>
          ))}
        </nav>

        <div className="flex h-[22px] border-b border-[#8d8983] bg-linear-to-b from-[#dcd9d2] to-[#cfcbc3] text-[10px]" role="tablist">
          {tabs.map((tab, i) => (
            <button
              key={tab}
              type="button"
              role="tab"
              aria-selected={i === 0}
              className={
                i === 0
                  ? '-mb-px rounded-t-[6px] border border-b-0 border-[#8d8983] bg-linear-to-b from-[#f7f6f3] to-[#cdc9c1] px-[11px] pb-[3px] text-black'
                  : 'px-[11px] pt-[2px] text-[#4a4a4a]'
              }
            >
              {tab}
            </button>
          ))}
        </div>

        <div className="flex h-[80px] items-start gap-[3px] bg-linear-to-b from-[#cdc9c1] to-[#c4c0b8] pl-[3px] pt-[3px]">
          {ribbonGroups.map((group) => (
            <RibbonGroup key={group.name} group={group} />
          ))}
        </div>

        <div className="flex flex-1 flex-col pb-1 pl-px">
          <Toolbar />
          <Canvas />
          <div className="h-px bg-white" />
        </div>
      </main>
    </div>
  );
};

export default App;
